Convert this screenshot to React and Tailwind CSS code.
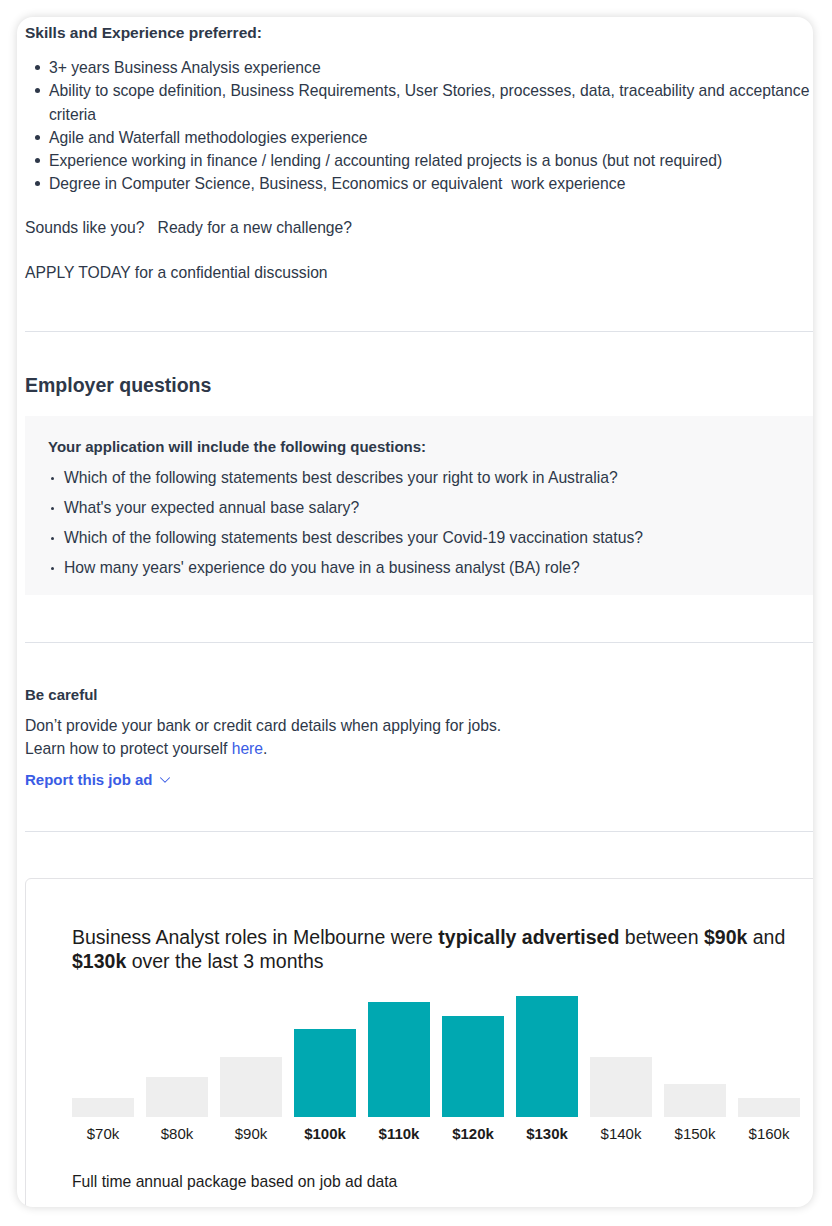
import React from "react";
import { ChevronDown } from "lucide-react";

const skills = [
  "3+ years Business Analysis experience",
  "Ability to scope definition, Business Requirements, User Stories, processes, data, traceability and acceptance criteria",
  "Agile and Waterfall methodologies experience",
  "Experience working in finance / lending / accounting related projects is a bonus (but not required)",
  "Degree in Computer Science, Business, Economics or equivalent\u00a0 work experience",
];

const questions = [
  "Which of the following statements best describes your right to work in Australia?",
  "What's your expected annual base salary?",
  "Which of the following statements best describes your Covid-19 vaccination status?",
  "How many years' experience do you have in a business analyst (BA) role?",
];

const bars = [
  { label: "$70k", h: 19, hot: false },
  { label: "$80k", h: 40, hot: false },
  { label: "$90k", h: 60, hot: false },
  { label: "$100k", h: 88, hot: true },
  { label: "$110k", h: 115, hot: true },
  { label: "$120k", h: 101, hot: true },
  { label: "$130k", h: 121, hot: true },
  { label: "$140k", h: 60, hot: false },
  { label: "$150k", h: 33, hot: false },
  { label: "$160k", h: 19, hot: false },
];

const SalaryChart = () => (
  <div className="mt-[46px] w-[822px] rounded-tl-md border border-[#e3e3e6] pl-[46px] pt-[46px] text-[#1c1c1c]">
    <p className="w-[730px] text-[19.5px] leading-[24px]">
      Business Analyst roles in Melbourne were{" "}
      <span className="font-bold">typically advertised</span> between{" "}
      <span className="font-bold">$90k</span> and{" "}
      <span className="font-bold">$130k</span> over the last 3 months
    </p>

    {/* bars */}
    <div className="mt-[14px] flex h-[130px] items-end gap-[12px]">
      {bars.map((b) => (
        <div
          key={b.label}
          className={`w-[62px] ${b.hot ? "bg-[#00a8b1]" : "bg-[#eeeeee]"}`}
          style={{ height: b.h }}
        />
      ))}
    </div>
    <div className="mt-[7px] flex gap-[12px]">
      {bars.map((b) => (
        <span
          key={b.label}
          className={`w-[62px] text-center text-[15px] leading-[20px] ${b.hot ? "font-bold" : ""}`}
        >
          {b.label}
        </span>
      ))}
    </div>

    <p className="mt-[27px] pb-[40px] text-[15.7px] leading-[22px]">
      Full time annual package based on job ad data
    </p>
  </div>
);

export default function App() {
  return (
    <div className="min-h-[1226px] bg-white p-[17px] font-['Liberation_Sans',Arial,sans-serif]">
      <div className="h-[1190px] w-[796px] overflow-hidden rounded-2xl bg-white shadow-[0_0_10px_rgba(0,0,0,0.16)]">
        <div className="w-[796px] pl-[8px] pt-[5px] text-[#2e3849]">
          {/* description tail */}
          <p className="text-[15.5px] font-bold leading-[22px]">Skills and Experience preferred:</p>
          <ul className="mt-[12px] text-[15.7px] leading-[23.25px]">
            {skills.map((s) => (
              <li key={s} className="flex">
                <span className="ml-[10px] mr-[9px] mt-[9px] h-[5px] w-[5px] shrink-0 rounded-full bg-[#2e3849]" />
                <span>{s}</span>
              </li>
            ))}
          </ul>
          <p className="mt-[20px] whitespace-pre text-[15.7px] leading-[23.25px]">
            Sounds like you?   Ready for a new challenge?
          </p>
          <p className="mt-[22px] text-[15.7px] leading-[23.25px]">APPLY TODAY for a confidential discussion</p>

          <hr className="mt-[47px] border-[#dfe2e8]" />

          {/* employer questions */}
          <h2 className="mt-[39px] text-[19.5px] font-bold leading-[28px]">Employer questions</h2>
          <div className="mt-[17px] bg-[#f8f8f9] pb-[16px] pl-[23px] pt-[20px]">
            <p className="text-[15px] font-bold leading-[22px]">
              Your application will include the following questions:
            </p>
            <ul className="mt-[9px] flex flex-col gap-[8px] text-[15.7px] leading-[22px]">
              {questions.map((q) => (
                <li key={q} className="flex">
                  <span className="ml-[3px] mr-[10px] mt-[10px] h-[3px] w-[3px] shrink-0 rounded-full bg-[#2e3849]" />
                  <span>{q}</span>
                </li>
              ))}
            </ul>
          </div>

          <hr className="mt-[47px] border-[#dfe2e8]" />

          {/* be careful */}
          <p className="mt-[41px] text-[15px] font-bold leading-[22px]">Be careful</p>
          <p className="mt-[8px] text-[15.7px] leading-[23px]">
            Don’t provide your bank or credit card details when applying for jobs.
            <br />
            Learn how to protect yourself <span className="text-[#3a5ce5]">here</span>.
          </p>
          <button className="mt-[8px] flex items-center gap-[3px] text-[15px] font-bold leading-[23px] text-[#3a5ce5]">
            Report this job ad
            <ChevronDown className="h-[18px] w-[18px]" strokeWidth={1.4} />
          </button>

          <hr className="mt-[40px] border-[#dfe2e8]" />

          <SalaryChart />
        </div>
      </div>
    </div>
  );
}
